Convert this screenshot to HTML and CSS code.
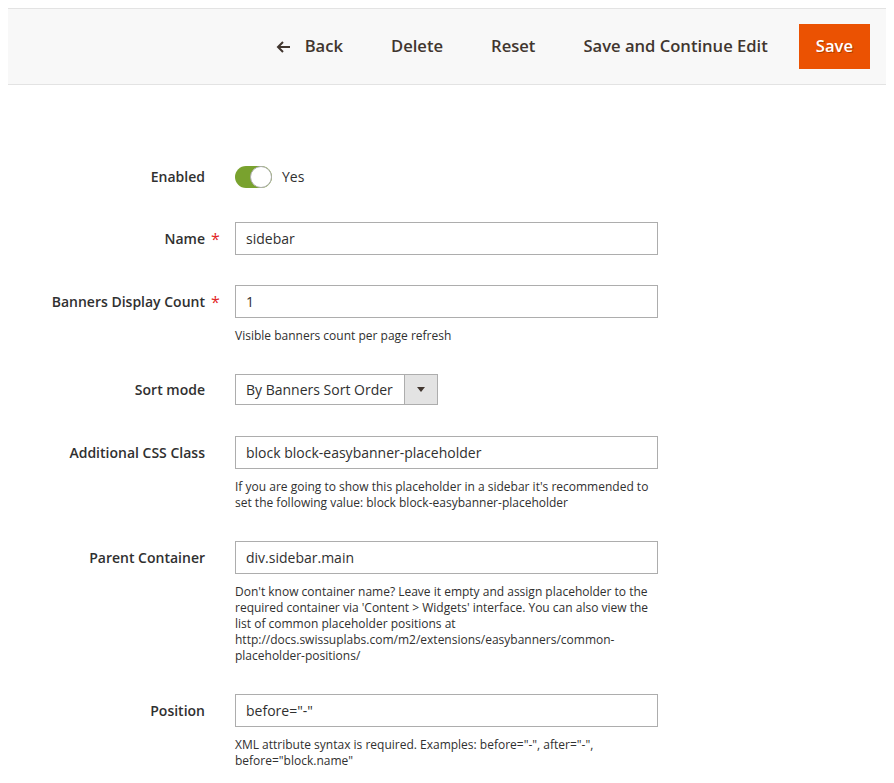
FILE: index.html
```html
<!DOCTYPE html>
<html>
<head>
<meta charset="utf-8">
<link rel="stylesheet" href="styles.css">
</head>
<body>
<div class="page-actions">
  <button class="action back">
    <svg class="back-icon" width="15" height="12" viewBox="0 0 15 12"><path d="M14 6H2M7 1L2 6l5 5" fill="none" stroke="#41362f" stroke-width="2"/></svg>
    Back
  </button>
  <button class="action">Delete</button>
  <button class="action">Reset</button>
  <button class="action">Save and Continue Edit</button>
  <button class="action primary">Save</button>
</div>

<form class="form">
  <div class="field field-switch">
    <div class="label">Enabled</div>
    <div class="req"></div>
    <div class="control">
      <div class="switch-row">
        <span class="switch"><span class="knob"></span></span>
        <span class="switch-text">Yes</span>
      </div>
    </div>
  </div>

  <div class="field">
    <div class="label">Name</div>
    <div class="req">*</div>
    <div class="control">
      <div class="input">sidebar</div>
    </div>
  </div>

  <div class="field">
    <div class="label">Banners Display Count</div>
    <div class="req">*</div>
    <div class="control">
      <div class="input">1</div>
      <div class="note">Visible banners count per page refresh</div>
    </div>
  </div>

  <div class="field field-select">
    <div class="label">Sort mode</div>
    <div class="req"></div>
    <div class="control">
      <div class="select">
        <span class="select-text">By Banners Sort Order</span>
        <span class="select-arrow"><span class="tri"></span></span>
      </div>
    </div>
  </div>

  <div class="field">
    <div class="label">Additional CSS Class</div>
    <div class="req"></div>
    <div class="control">
      <div class="input">block block-easybanner-placeholder</div>
      <div class="note">If you are going to show this placeholder in a sidebar it's recommended to set the following value: block block-easybanner-placeholder</div>
    </div>
  </div>

  <div class="field">
    <div class="label">Parent Container</div>
    <div class="req"></div>
    <div class="control">
      <div class="input">div.sidebar.main</div>
      <div class="note">Don't know container name? Leave it empty and assign placeholder to the required container via 'Content &gt; Widgets' interface. You can also view the list of common placeholder positions at http://docs.swissuplabs.com/m2/extensions/easybanners/common-placeholder-positions/</div>
    </div>
  </div>

  <div class="field">
    <div class="label">Position</div>
    <div class="req"></div>
    <div class="control">
      <div class="input">before="-"</div>
      <div class="note">XML attribute syntax is required. Examples: before="-", after="-", before="block.name"</div>
    </div>
  </div>
</form>
</body>
</html>
```

FILE: styles.css
```css
body {
  margin: 8px;
  font-family: "Open Sans", "Liberation Sans", sans-serif;
  color: #303030;
  background: #fff;
}

.page-actions {
  display: flex;
  align-items: center;
  justify-content: flex-end;
  height: 75px;
  background: #f8f8f8;
  border-top: 1px solid #e3e3e3;
  border-bottom: 1px solid #e3e3e3;
  padding-right: 16px;
}

.action {
  font-family: "Open Sans", "Liberation Sans", sans-serif;
  font-size: 16.6px;
  font-weight: 600;
  color: #41362f;
  background: none;
  border: 0;
  padding: 0 24px 2px;
  height: 45px;
  display: flex;
  align-items: center;
  cursor: pointer;
}

.action.back {
  gap: 14px;
}

.back-icon {
  display: block;
  margin-top: 2px;
}

.action.primary {
  background: #eb5202;
  color: #fff;
  padding: 0 17px 2px;
  margin-left: 7px;
  text-shadow: 1px 1px 0 rgba(0, 0, 0, 0.25);
}

.form {
  padding-top: 74px;
  display: flex;
  flex-direction: column;
  gap: 30px;
}

.field {
  display: flex;
  align-items: flex-start;
}

.label {
  width: 197px;
  text-align: right;
  font-size: 14px;
  font-weight: 600;
  line-height: 33px;
  color: #303030;
}

.field-switch .label {
  padding-top: 2px;
  line-height: 31px;
}

.field-select .label {
  line-height: 32px;
}

.req {
  width: 30px;
  height: 33px;
  padding-left: 6px;
  padding-top: 2px;
  box-sizing: border-box;
  color: #e22626;
  font-size: 16px;
  line-height: 31px;
}

.field-select .req {
  height: 32px;
}

.control {
  width: 423px;
}

.input {
  box-sizing: border-box;
  height: 33px;
  border: 1px solid #adadad;
  padding: 0 10px;
  font-size: 14px;
  line-height: 31px;
  color: #303030;
  background: #fff;
}

.note {
  margin-top: 10px;
  font-size: 12px;
  line-height: 16px;
  color: #303030;
}

.switch-row {
  display: flex;
  align-items: center;
  box-sizing: border-box;
  height: 33px;
  padding-top: 2px;
  gap: 10px;
}

.switch {
  box-sizing: border-box;
  width: 37px;
  height: 22px;
  border-radius: 11px;
  background: #79a22e;
  position: relative;
}

.knob {
  position: absolute;
  right: 0;
  top: 0;
  box-sizing: border-box;
  width: 22px;
  height: 22px;
  border-radius: 50%;
  background: #fff;
  border: 1px solid #adadad;
}

.switch-text {
  font-size: 14px;
  color: #303030;
}

.select {
  display: flex;
  width: 203px;
  height: 31px;
  box-sizing: border-box;
  border: 1px solid #adadad;
  background: #fff;
}

.select-text {
  flex: 1;
  padding-left: 10px;
  font-size: 14px;
  line-height: 29px;
  color: #303030;
}

.select-arrow {
  width: 32px;
  border-left: 1px solid #adadad;
  background: #e3e3e3;
  display: flex;
  align-items: center;
  justify-content: center;
}

.tri {
  width: 0;
  height: 0;
  border-left: 4px solid transparent;
  border-right: 4px solid transparent;
  border-top: 5px solid #41362f;
}
```
